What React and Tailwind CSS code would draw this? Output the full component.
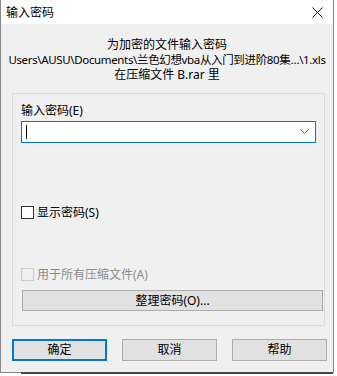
import React from "react";

const F = { fontFamily: '"Noto Sans", "Noto Sans CJK SC", sans-serif' };

function Btn({ children, primary, className = "" }) {
  return (
    <div
      className={
        "flex items-center justify-center bg-[#e1e1e1] text-[12px] text-black " +
        (primary ? "border-2 border-[#0078d7] " : "border border-[#adadad] ") +
        className
      }
    >
      {children}
    </div>
  );
}

export default function App() {
  return (
    <div className="w-[337px] h-[376px] bg-white relative overflow-hidden" style={F}>
      <div className="flex flex-col w-[334px] h-[373px] border-l border-r border-b border-[#8a8a8a] bg-[#f0f0f0]">
        {/* title bar */}
        <div className="h-[24px] bg-white flex items-center justify-between pl-[5px] pr-[10px] shrink-0">
          <span className="text-[12px] leading-[15px] text-black">输入密码</span>
          <svg width="11" height="11" viewBox="0 0 11 11">
            <path d="M0.5 0.5 L10.5 10.5 M10.5 0.5 L0.5 10.5" stroke="#111" strokeWidth="1" />
          </svg>
        </div>
        {/* info text */}
        <div className="flex flex-col items-center pt-[13px] text-[12px] leading-[15px] text-black whitespace-nowrap">
          <div>为加密的文件输入密码</div>
          <div className="text-[11.5px] tracking-[-0.35px]">Users\AUSU\Documents\兰色幻想vba从入门到进阶80集…\1.xls</div>
          <div>在压缩文件 B.rar 里</div>
        </div>
        {/* group box */}
        <div className="mt-[11px] ml-[11px] w-[313px] h-[233px] border border-[#dcdcdc] flex flex-col pl-[8px] shrink-0">
          <div className="mt-[9px] text-[12px] leading-[15px] text-black">输入密码(E)</div>
          <div className="mt-[3px] w-[295px] h-[22px] bg-white border border-[#0078d7] flex items-center justify-between pl-[4px] pr-[6px]">
            <div className="w-px h-[14px] bg-black" />
            <svg width="9" height="6" viewBox="0 0 9 6">
              <path d="M0.5 0.5 L4.5 4.5 L8.5 0.5" stroke="#555" strokeWidth="1" fill="none" />
            </svg>
          </div>
          <div className="mt-[62px] flex items-center gap-[3px]">
            <div className="w-[13px] h-[13px] border border-[#333] bg-white" />
            <span className="text-[12px] leading-[15px] text-black">显示密码(S)</span>
          </div>
          <div className="mt-[47px] flex items-center gap-[3px]">
            <div className="w-[13px] h-[13px] border border-[#cccccc] bg-[#f0f0f0]" />
            <span className="text-[12px] leading-[15px] text-[#8d8d8d]">用于所有压缩文件(A)</span>
          </div>
          <Btn className="mt-[8px] ml-[1px] w-[301px] h-[21px]">整理密码(O)...</Btn>
        </div>
        {/* bottom buttons */}
        <div className="mt-[13px] ml-[11px] flex gap-[15px]">
          <Btn primary className="w-[95px] h-[22px]">确定</Btn>
          <Btn className="w-[95px] h-[22px]">取消</Btn>
          <Btn className="w-[95px] h-[22px]">帮助</Btn>
        </div>
      </div>
      <div className="absolute left-[21px] top-[372px] w-[312px] h-[2px] bg-[#444]" />
    </div>
  );
}
